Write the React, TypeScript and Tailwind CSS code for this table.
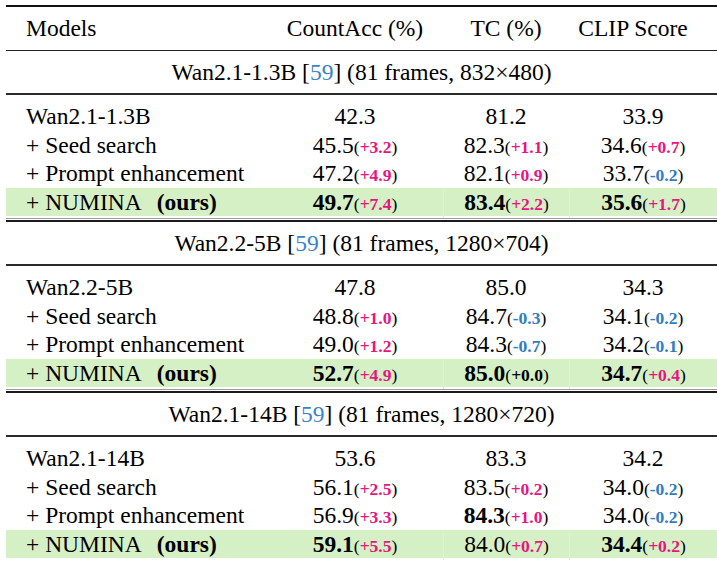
type Cell = { v: string; d?: string; b?: boolean };
type Row = { name: string; cells: Cell[]; ours?: boolean };
type Section = { model: string; spec: string; rows: Row[] };

const sections: Section[] = [
  {
    model: "Wan2.1-1.3B",
    spec: "(81 frames, 832×480)",
    rows: [
      { name: "Wan2.1-1.3B", cells: [{ v: "42.3" }, { v: "81.2" }, { v: "33.9" }] },
      { name: "+ Seed search", cells: [{ v: "45.5", d: "+3.2" }, { v: "82.3", d: "+1.1" }, { v: "34.6", d: "+0.7" }] },
      { name: "+ Prompt enhancement", cells: [{ v: "47.2", d: "+4.9" }, { v: "82.1", d: "+0.9" }, { v: "33.7", d: "-0.2" }] },
      { name: "+ NUMINA", ours: true, cells: [{ v: "49.7", d: "+7.4", b: true }, { v: "83.4", d: "+2.2", b: true }, { v: "35.6", d: "+1.7", b: true }] },
    ],
  },
  {
    model: "Wan2.2-5B",
    spec: "(81 frames, 1280×704)",
    rows: [
      { name: "Wan2.2-5B", cells: [{ v: "47.8" }, { v: "85.0" }, { v: "34.3" }] },
      { name: "+ Seed search", cells: [{ v: "48.8", d: "+1.0" }, { v: "84.7", d: "-0.3" }, { v: "34.1", d: "-0.2" }] },
      { name: "+ Prompt enhancement", cells: [{ v: "49.0", d: "+1.2" }, { v: "84.3", d: "-0.7" }, { v: "34.2", d: "-0.1" }] },
      { name: "+ NUMINA", ours: true, cells: [{ v: "52.7", d: "+4.9", b: true }, { v: "85.0", d: "+0.0", b: true }, { v: "34.7", d: "+0.4", b: true }] },
    ],
  },
  {
    model: "Wan2.1-14B",
    spec: "(81 frames, 1280×720)",
    rows: [
      { name: "Wan2.1-14B", cells: [{ v: "53.6" }, { v: "83.3" }, { v: "34.2" }] },
      { name: "+ Seed search", cells: [{ v: "56.1", d: "+2.5" }, { v: "83.5", d: "+0.2" }, { v: "34.0", d: "-0.2" }] },
      { name: "+ Prompt enhancement", cells: [{ v: "56.9", d: "+3.3" }, { v: "84.3", d: "+1.0", b: true }, { v: "34.0", d: "-0.2" }] },
      { name: "+ NUMINA", ours: true, cells: [{ v: "59.1", d: "+5.5", b: true }, { v: "84.0", d: "+0.7" }, { v: "34.4", d: "+0.2", b: true }] },
    ],
  },
];

function Delta({ d }: { d: string }) {
  const color = d === "+0.0" ? "text-black" : d.startsWith("-") ? "text-[#2f7cc0]" : "text-[#e6157f]";
  return (
    <span className="text-[17.5px]">
      (<span className={`font-bold ${color}`}>{d}</span>)
    </span>
  );
}

function DataRow({ row }: { row: Row }) {
  return (
    <div
      className={`grid h-[28.5px] grid-cols-[261px_176px_126px_148px] leading-[28.5px] ${
        row.ours ? "bg-[#d6f0c6]" : ""
      }`}
    >
      <div className="pl-[20px] whitespace-nowrap">
        {row.name}
        {row.ours && <span className="ml-[15px] font-bold">(ours)</span>}
      </div>
      {row.cells.map((c, i) => (
        <div
          key={i}
          className={`text-center whitespace-nowrap ${row.ours && i > 0 ? "border-l border-[#dcf3cf]" : ""}`}
        >
          <span className={c.b ? "font-bold" : ""}>{c.v}</span>
          {c.d && <Delta d={c.d} />}
        </div>
      ))}
    </div>
  );
}

export default function App() {
  return (
    <div className="h-[561px] w-[717px] overflow-hidden bg-white pl-[6px] pt-[5px] font-['Liberation_Serif',serif] text-[23.5px] text-black">
      <div className="h-[2px] bg-[#111]" />
      <div className="grid h-[43px] grid-cols-[261px_176px_126px_148px] leading-[43px]">
        <div className="pl-[20px]">Models</div>
        <div className="text-center">CountAcc (%)</div>
        <div className="text-center">TC (%)</div>
        <div className="pr-[20px] text-center">CLIP Score</div>
      </div>
      <div className="h-px bg-[#222]" />
      {sections.map((s, si) => (
        <div key={s.model}>
          <div className="h-[42px] text-center leading-[42px] whitespace-nowrap">
            {s.model} [<span className="text-[#3b84c5]">59</span>] {s.spec}
          </div>
          <div className="h-[2px] bg-[#2a2a2a]" />
          <div className="pt-[7px]">
            {s.rows.map((r) => (
              <DataRow key={r.name} row={r} />
            ))}
          </div>
          {si < sections.length - 1 && (
            <div className="pt-[2px]">
              <div className="h-px bg-[#9a9a9a]" />
              <div className="mt-px h-[2px] bg-[#1a1a1a]" />
            </div>
          )}
        </div>
      ))}
    </div>
  );
}
